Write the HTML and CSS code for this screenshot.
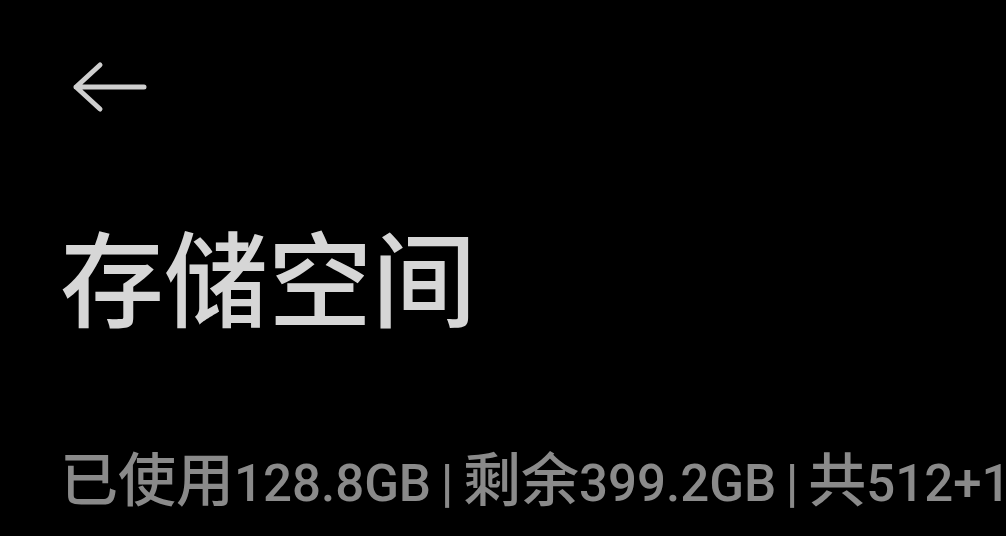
FILE: index.html
```html
<!DOCTYPE html>
<html lang="zh-CN">
<head>
<meta charset="utf-8">
<link rel="stylesheet" href="styles.css">
</head>
<body>
<div class="page">
  <div class="toolbar">
    <svg class="back" width="76" height="52" viewBox="0 0 76 52">
      <path d="M28 4 L4 26 L28 48 M4 26 H72" fill="none" stroke="#cfcfcf" stroke-width="5" stroke-linecap="round" stroke-linejoin="round"/>
    </svg>
  </div>
  <h1 class="title">存储空间</h1>
  <p class="summary">已使用<span class="num">128.8GB | </span>剩余<span class="num">399.2GB | </span>共<span class="num">512+16GB</span></p>
</div>
</body>
</html>
```
FILE: styles.css
```css
html, body {
  margin: 0;
  padding: 0;
  background: #000;
  width: 1006px;
  height: 536px;
  overflow: hidden;
}
.page {
  font-family: "Noto Sans CJK SC", "Noto Sans", sans-serif;
  padding-left: 60px;
  white-space: nowrap;
}
.toolbar {
  padding-top: 61px;
  padding-left: 12px;
  height: 52px;
}
.back { display: block; }
.title {
  margin: 102px 0 0 0;
  font-size: 104px;
  font-weight: 500;
  color: #d6d6d6;
  line-height: 120px;
}
.summary {
  margin: 106px 0 0 0;
  font-size: 58px;
  font-weight: 500;
  color: #8a8a8a;
  line-height: 70px;
}
.num {
  font-family: Roboto, "Noto Sans", sans-serif;
  font-size: 51px;
  font-weight: 500;
  word-spacing: -3px;
}
```
